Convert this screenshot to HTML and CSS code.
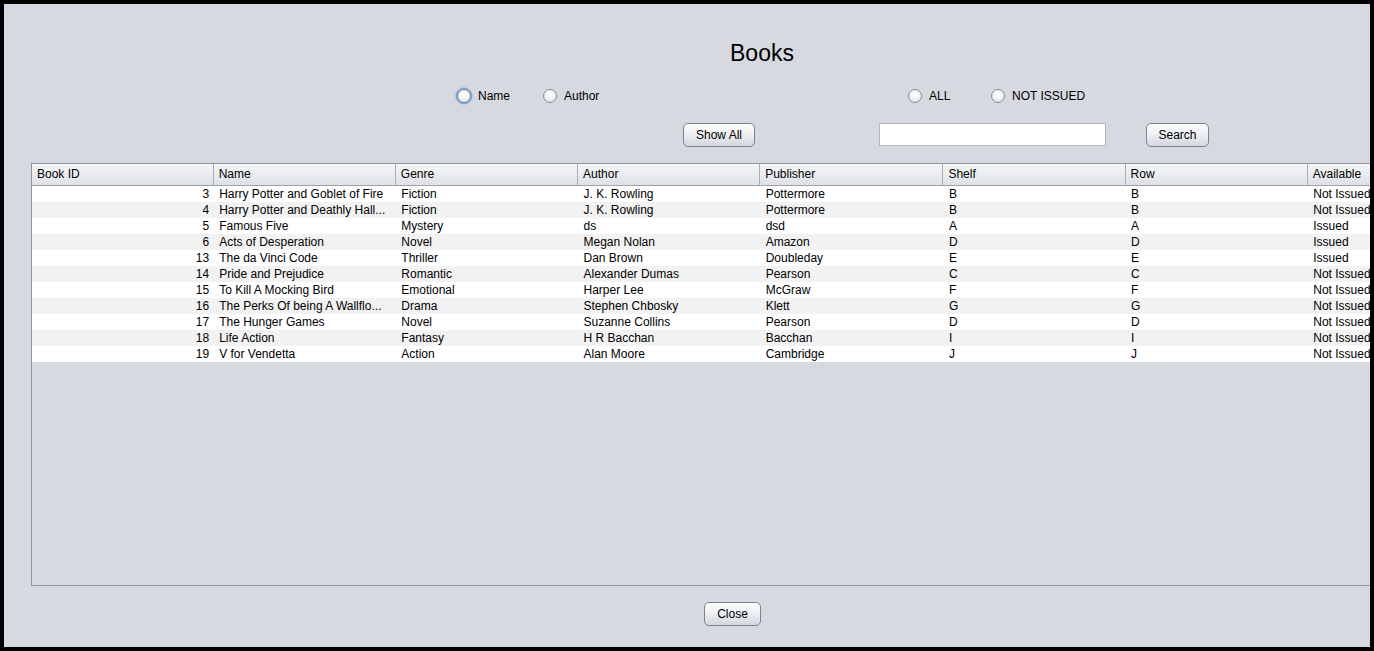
FILE: index.html
```html
<!DOCTYPE html>
<html>
<head>
<meta charset="utf-8">
<link rel="stylesheet" href="styles.css">
</head>
<body>
<div class="window">
  <div class="title-row"><h1 class="title">Books</h1></div>

  <div class="radio-row">
    <label class="radio g-name"><span class="circle focused"></span>Name</label>
    <label class="radio g-author"><span class="circle"></span>Author</label>
    <label class="radio g-all"><span class="circle"></span>ALL</label>
    <label class="radio"><span class="circle"></span>NOT ISSUED</label>
  </div>

  <div class="action-row">
    <button class="btn btn-showall">Show All</button>
    <input class="field" type="text">
    <button class="btn btn-search">Search</button>
  </div>

  <div class="table-box">
    <table class="grid">
      <colgroup>
        <col class="c181"><col class="c182"><col class="c182"><col class="c182">
        <col class="c183"><col class="c182"><col class="c182"><col class="c183">
      </colgroup>
      <thead>
        <tr>
          <th>Book ID</th><th>Name</th><th>Genre</th><th>Author</th><th>Publisher</th><th>Shelf</th><th>Row</th><th>Available</th>
        </tr>
      </thead>
      <tbody>
        <tr><td class="num">3</td><td>Harry Potter and Goblet of Fire</td><td>Fiction</td><td>J. K. Rowling</td><td>Pottermore</td><td>B</td><td>B</td><td>Not Issued</td></tr>
        <tr><td class="num">4</td><td>Harry Potter and Deathly Hall...</td><td>Fiction</td><td>J. K. Rowling</td><td>Pottermore</td><td>B</td><td>B</td><td>Not Issued</td></tr>
        <tr><td class="num">5</td><td>Famous Five</td><td>Mystery</td><td>ds</td><td>dsd</td><td>A</td><td>A</td><td>Issued</td></tr>
        <tr><td class="num">6</td><td>Acts of Desperation</td><td>Novel</td><td>Megan Nolan</td><td>Amazon</td><td>D</td><td>D</td><td>Issued</td></tr>
        <tr><td class="num">13</td><td>The da Vinci Code</td><td>Thriller</td><td>Dan Brown</td><td>Doubleday</td><td>E</td><td>E</td><td>Issued</td></tr>
        <tr><td class="num">14</td><td>Pride and Prejudice</td><td>Romantic</td><td>Alexander Dumas</td><td>Pearson</td><td>C</td><td>C</td><td>Not Issued</td></tr>
        <tr><td class="num">15</td><td>To Kill A Mocking Bird</td><td>Emotional</td><td>Harper Lee</td><td>McGraw</td><td>F</td><td>F</td><td>Not Issued</td></tr>
        <tr><td class="num">16</td><td>The Perks Of being A Wallflo...</td><td>Drama</td><td>Stephen Chbosky</td><td>Klett</td><td>G</td><td>G</td><td>Not Issued</td></tr>
        <tr><td class="num">17</td><td>The Hunger Games</td><td>Novel</td><td>Suzanne Collins</td><td>Pearson</td><td>D</td><td>D</td><td>Not Issued</td></tr>
        <tr><td class="num">18</td><td>Life Action</td><td>Fantasy</td><td>H R Bacchan</td><td>Bacchan</td><td>I</td><td>I</td><td>Not Issued</td></tr>
        <tr><td class="num">19</td><td>V for Vendetta</td><td>Action</td><td>Alan Moore</td><td>Cambridge</td><td>J</td><td>J</td><td>Not Issued</td></tr>
      </tbody>
    </table>
  </div>

  <div class="close-row"><button class="btn btn-close">Close</button></div>
</div>
</body>
</html>
```
FILE: styles.css
```css
html, body {
  margin: 0;
  padding: 0;
  background: #000;
}
.window {
  box-sizing: border-box;
  width: 1374px;
  height: 651px;
  border: 4px solid #000;
  background: #d6d9df;
  font-family: "Liberation Sans", Arial, sans-serif;
  font-size: 12px;
  color: #000;
  overflow: hidden;
}
.title-row {
  padding-top: 35px;
  padding-left: 726px;
  height: 28px;
}
.title {
  margin: 0;
  font-weight: normal;
  font-size: 23px;
  line-height: 28px;
}
.radio-row {
  margin-top: 19px;
  height: 20px;
  display: flex;
  align-items: center;
  padding-left: 453px;
}
.radio {
  display: flex;
  align-items: center;
  gap: 7px;
  line-height: 20px;
}
.g-name { width: 86px; }
.g-author { width: 365px; }
.g-all { width: 83px; }
.circle {
  box-sizing: border-box;
  width: 14px;
  height: 14px;
  border-radius: 50%;
  border: 1px solid #8a8f98;
  background: radial-gradient(circle at 50% 40%, #ffffff 0%, #f3f4f6 45%, #cfd3d9 100%);
}
.circle.focused {
  box-shadow: 0 0 0 1.5px #82a7d4;
  border-color: #6f7f96;
}
.action-row {
  margin-top: 17px;
  height: 24px;
  display: flex;
  align-items: flex-start;
  padding-left: 679px;
}
.btn {
  box-sizing: border-box;
  height: 24px;
  border: 1px solid #7d838c;
  border-radius: 5px;
  background: linear-gradient(#fdfdfd 0%, #eef0f3 45%, #dfe2e7 75%, #d2d6dd 100%);
  font-family: "Liberation Sans", Arial, sans-serif;
  font-size: 12px;
  color: #000;
  padding: 0;
  box-shadow: inset 0 1px 0 #ffffff;
}
.btn-showall { width: 72px; }
.field {
  box-sizing: border-box;
  margin-left: 124px;
  width: 227px;
  height: 23px;
  border: 1px solid #b3b7be;
  background: #fff;
  padding: 0;
}
.btn-search { margin-left: 40px; width: 63px; }
.table-box {
  box-sizing: border-box;
  margin-top: 16px;
  margin-left: 27px;
  height: 423px;
  border: 1px solid #8f949c;
  border-right: none;
  background: #d6d9df;
  overflow: hidden;
}
.grid {
  border-collapse: collapse;
  table-layout: fixed;
  width: 1459px;
}
.c181 { width: 181px; }
.c182 { width: 182px; }
.c183 { width: 183px; }
.grid th {
  box-sizing: border-box;
  height: 21px;
  padding: 0 5px;
  text-align: left;
  font-weight: normal;
  font-size: 12px;
  background: linear-gradient(#f4f5f7 0%, #eaecef 50%, #dde0e5 100%);
  border-right: 1px solid #a9adb4;
  border-bottom: 1px solid #9ea3ab;
  white-space: nowrap;
  overflow: hidden;
}
.grid td {
  height: 16px;
  padding: 0 5px 0 6px;
  line-height: 16px;
  white-space: nowrap;
  overflow: hidden;
  background: #fff;
}
.grid tbody tr:nth-child(even) td { background: #f2f2f2; }
.grid td.num {
  text-align: right;
  padding-right: 4px;
}
.close-row {
  margin-top: 16px;
  padding-left: 700px;
}
.btn-close { width: 57px; }
```
